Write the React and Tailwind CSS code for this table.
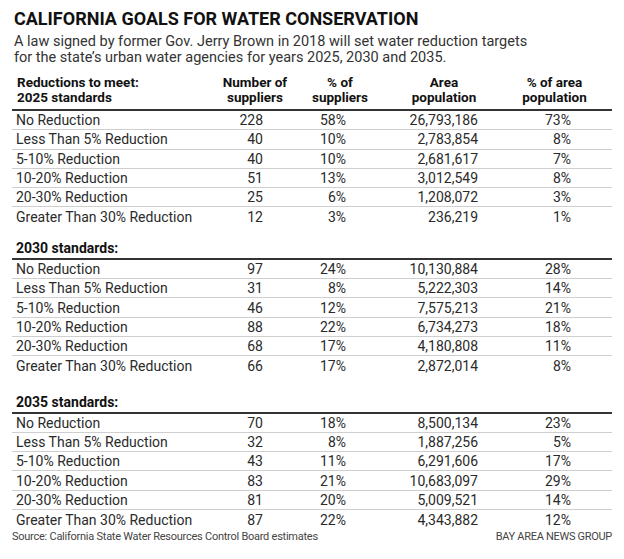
// Water conservation table - newspaper style chart
const sections = [
  {
    title: '2030 standards:',
    gap: 'h-[33px]',
    rows: [
      ['No Reduction', '97', '24%', '10,130,884', '28%'],
      ['Less Than 5% Reduction', '31', '8%', '5,222,303', '14%'],
      ['5-10% Reduction', '46', '12%', '7,575,213', '21%'],
      ['10-20% Reduction', '88', '22%', '6,734,273', '18%'],
      ['20-30% Reduction', '68', '17%', '4,180,808', '11%'],
      ['Greater Than 30% Reduction', '66', '17%', '2,872,014', '8%'],
    ],
  },
  {
    title: '2035 standards:',
    gap: 'h-[38px]',
    rows: [
      ['No Reduction', '70', '18%', '8,500,134', '23%'],
      ['Less Than 5% Reduction', '32', '8%', '1,887,256', '5%'],
      ['5-10% Reduction', '43', '11%', '6,291,606', '17%'],
      ['10-20% Reduction', '83', '21%', '10,683,097', '29%'],
      ['20-30% Reduction', '81', '20%', '5,009,521', '14%'],
      ['Greater Than 30% Reduction', '87', '22%', '4,343,882', '12%'],
    ],
  },
];

const rows2025 = [
  ['No Reduction', '228', '58%', '26,793,186', '73%'],
  ['Less Than 5% Reduction', '40', '10%', '2,783,854', '8%'],
  ['5-10% Reduction', '40', '10%', '2,681,617', '7%'],
  ['10-20% Reduction', '51', '13%', '3,012,549', '8%'],
  ['20-30% Reduction', '25', '6%', '1,208,072', '3%'],
  ['Greater Than 30% Reduction', '12', '3%', '236,219', '1%'],
];

const grid = 'grid grid-cols-[195px_96px_74px_134px_99px]';

function Rows({ rows }) {
  return (
    <div>
      {rows.map((r, i) => (
        <div
          key={i}
          className={`${grid} h-[19.3px] items-center text-[14px] leading-[16px] text-[#2a2a2a] ${i < rows.length - 1 ? 'border-b border-[#cfcfcf]' : ''}`}
        >
          <span className="pl-[4px]">{r[0]}</span>
          <span className="text-right pr-[40px]">{r[1]}</span>
          <span className="text-right pr-[31px]">{r[2]}</span>
          <span className="text-right pr-[33px]">{r[3]}</span>
          <span className="text-right pr-[39px]">{r[4]}</span>
        </div>
      ))}
    </div>
  );
}

export default function App() {
  return (
    <div className="w-[624px] h-[559px] bg-white px-[12px] pt-[8px] font-['Roboto','Liberation_Sans',sans-serif] text-[#111]">
      <h1 className="pl-[2px] text-[18px] leading-[22px] font-bold">
        CALIFORNIA GOALS FOR WATER CONSERVATION
      </h1>
      <p className="mt-[4px] pl-[2px] text-[14.5px] leading-[16px] text-[#333]">
        A law signed by former Gov. Jerry Brown in 2018 will set water reduction targets
        <br />
        for the state’s urban water agencies for years 2025, 2030 and 2035.
      </p>

      {/* 2025 header */}
      <div className={`${grid} mt-[9px] pb-[5px] border-b-2 border-[#333] text-[13.5px] leading-[14.5px] font-bold`}>
        <span className="pl-[5px]">
          Reductions to meet:
          <br />
          2025 standards
        </span>
        <span className="text-center">
          Number of
          <br />
          suppliers
        </span>
        <span className="text-center">
          % of
          <br />
          suppliers
        </span>
        <span className="text-center">
          Area
          <br />
          population
        </span>
        <span className="text-center pr-[12px]">
          % of area
          <br />
          population
        </span>
      </div>
      <Rows rows={rows2025} />

      {sections.map((s) => (
        <div key={s.title}>
          <div className={`${s.gap} flex items-end pb-[2px] pl-[4px] border-b-2 border-[#333] text-[14px] leading-[16px] font-bold`}>
            {s.title}
          </div>
          <Rows rows={s.rows} />
        </div>
      ))}

      <div className="flex justify-between mt-[1px] text-[11px] leading-[14px] text-[#444]">
        <span className="tracking-[-0.25px]">Source: California State Water Resources Control Board estimates</span>
        <span className="tracking-[-0.3px]">BAY AREA NEWS GROUP</span>
      </div>
    </div>
  );
}
